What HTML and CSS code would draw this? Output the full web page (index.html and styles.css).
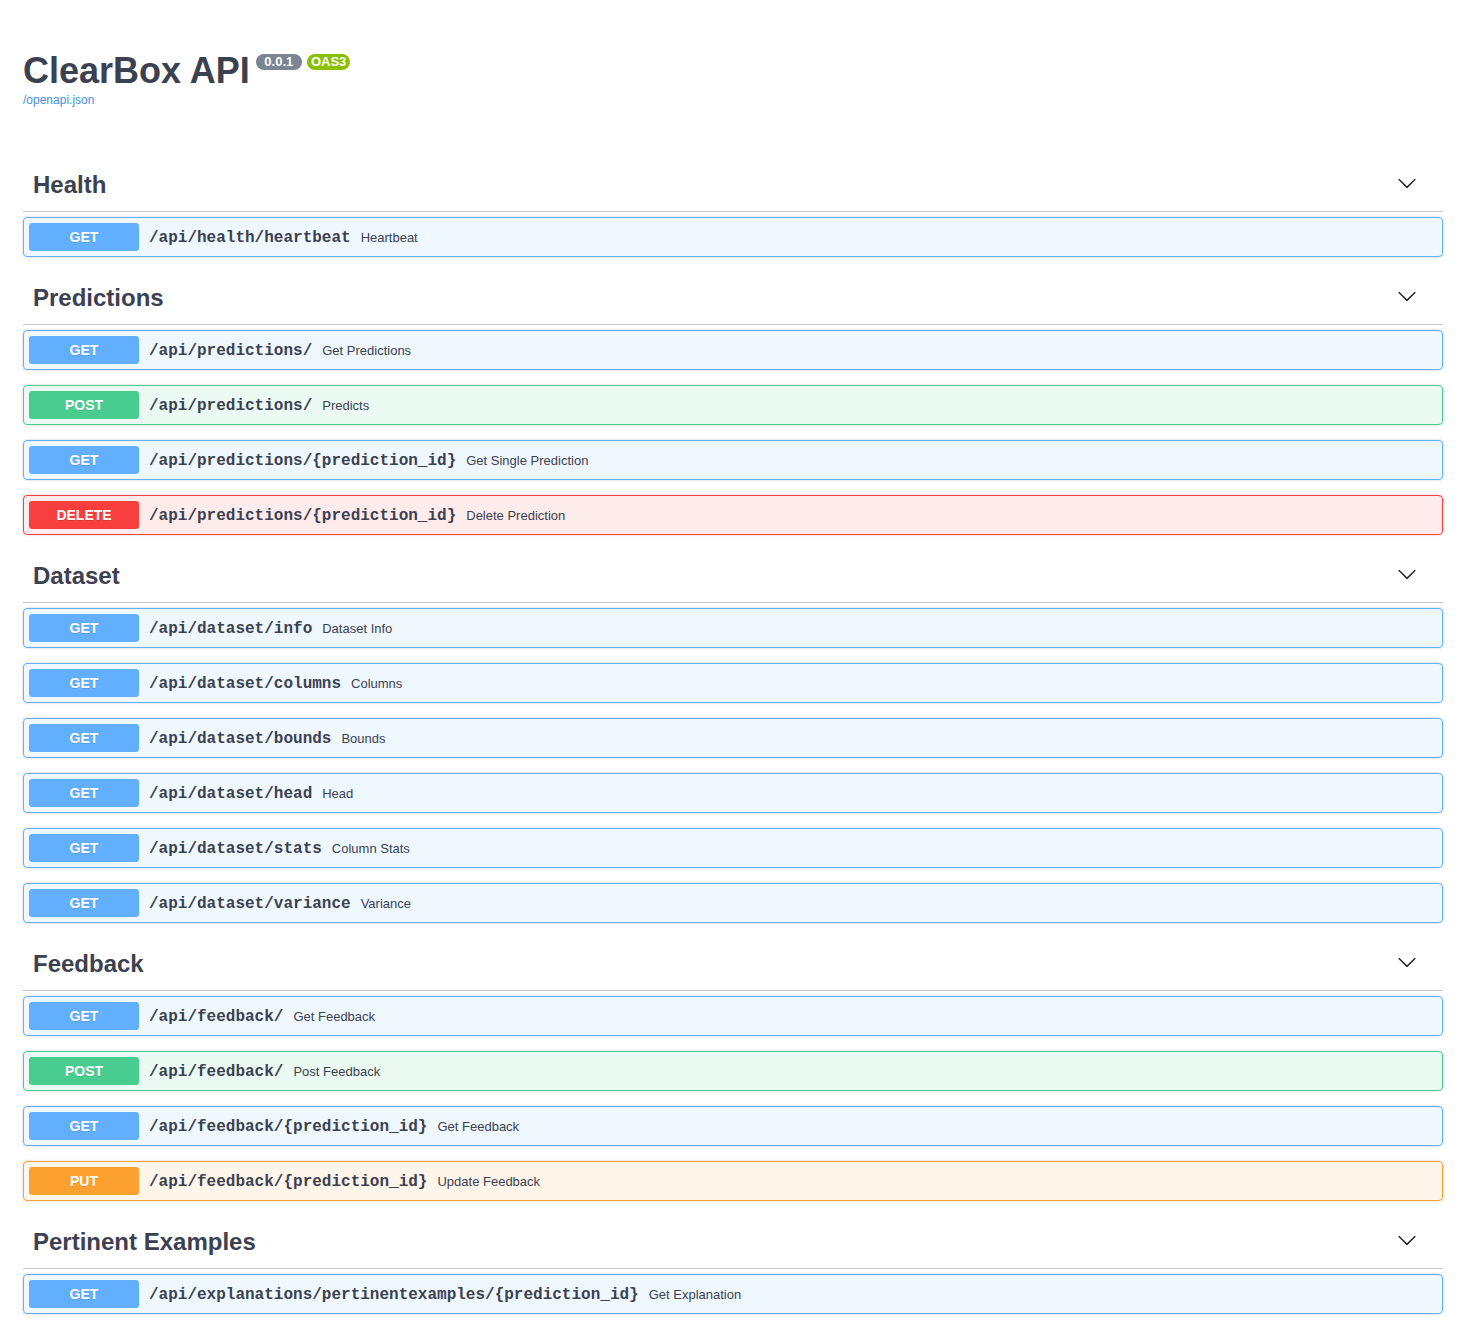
FILE: index.html
```html
<!DOCTYPE html>
<html lang="en">
<head>
<meta charset="utf-8">
<title>ClearBox API - Swagger UI</title>
<link rel="stylesheet" href="styles.css">
</head>
<body>
<div class="wrapper">
  <div class="info">
    <div class="title-row">
      <h2 class="title">ClearBox API</h2>
      <span class="pill pill-version"><pre class="version"> 0.0.1 </pre></span>
      <span class="pill pill-oas"><pre class="version">OAS3</pre></span>
    </div>
    <a class="url" href="#">/openapi.json</a>
  </div>

  <section class="tag-section">
    <h3 class="tag"><span>Health</span><svg class="arrow" width="20" height="20" viewBox="0 0 20 20"><path d="M17.418 6.109c.272-.268.709-.268.979 0s.271.701 0 .969l-7.908 7.83c-.27.268-.707.268-.979 0l-7.908-7.83c-.27-.268-.27-.701 0-.969.271-.268.709-.268.979 0L10 13.25l7.418-7.141z"/></svg></h3>
    <div class="op op-get"><span class="method">GET</span><span class="path">/api/health/heartbeat</span><span class="desc">Heartbeat</span></div>
  </section>

  <section class="tag-section">
    <h3 class="tag"><span>Predictions</span><svg class="arrow" width="20" height="20" viewBox="0 0 20 20"><path d="M17.418 6.109c.272-.268.709-.268.979 0s.271.701 0 .969l-7.908 7.83c-.27.268-.707.268-.979 0l-7.908-7.83c-.27-.268-.27-.701 0-.969.271-.268.709-.268.979 0L10 13.25l7.418-7.141z"/></svg></h3>
    <div class="op op-get"><span class="method">GET</span><span class="path">/api/predictions/</span><span class="desc">Get Predictions</span></div>
    <div class="op op-post"><span class="method">POST</span><span class="path">/api/predictions/</span><span class="desc">Predicts</span></div>
    <div class="op op-get"><span class="method">GET</span><span class="path">/api/predictions/{prediction_id}</span><span class="desc">Get Single Prediction</span></div>
    <div class="op op-delete"><span class="method">DELETE</span><span class="path">/api/predictions/{prediction_id}</span><span class="desc">Delete Prediction</span></div>
  </section>

  <section class="tag-section">
    <h3 class="tag"><span>Dataset</span><svg class="arrow" width="20" height="20" viewBox="0 0 20 20"><path d="M17.418 6.109c.272-.268.709-.268.979 0s.271.701 0 .969l-7.908 7.83c-.27.268-.707.268-.979 0l-7.908-7.83c-.27-.268-.27-.701 0-.969.271-.268.709-.268.979 0L10 13.25l7.418-7.141z"/></svg></h3>
    <div class="op op-get"><span class="method">GET</span><span class="path">/api/dataset/info</span><span class="desc">Dataset Info</span></div>
    <div class="op op-get"><span class="method">GET</span><span class="path">/api/dataset/columns</span><span class="desc">Columns</span></div>
    <div class="op op-get"><span class="method">GET</span><span class="path">/api/dataset/bounds</span><span class="desc">Bounds</span></div>
    <div class="op op-get"><span class="method">GET</span><span class="path">/api/dataset/head</span><span class="desc">Head</span></div>
    <div class="op op-get"><span class="method">GET</span><span class="path">/api/dataset/stats</span><span class="desc">Column Stats</span></div>
    <div class="op op-get"><span class="method">GET</span><span class="path">/api/dataset/variance</span><span class="desc">Variance</span></div>
  </section>

  <section class="tag-section">
    <h3 class="tag"><span>Feedback</span><svg class="arrow" width="20" height="20" viewBox="0 0 20 20"><path d="M17.418 6.109c.272-.268.709-.268.979 0s.271.701 0 .969l-7.908 7.83c-.27.268-.707.268-.979 0l-7.908-7.83c-.27-.268-.27-.701 0-.969.271-.268.709-.268.979 0L10 13.25l7.418-7.141z"/></svg></h3>
    <div class="op op-get"><span class="method">GET</span><span class="path">/api/feedback/</span><span class="desc">Get Feedback</span></div>
    <div class="op op-post"><span class="method">POST</span><span class="path">/api/feedback/</span><span class="desc">Post Feedback</span></div>
    <div class="op op-get"><span class="method">GET</span><span class="path">/api/feedback/{prediction_id}</span><span class="desc">Get Feedback</span></div>
    <div class="op op-put"><span class="method">PUT</span><span class="path">/api/feedback/{prediction_id}</span><span class="desc">Update Feedback</span></div>
  </section>

  <section class="tag-section">
    <h3 class="tag"><span>Pertinent Examples</span><svg class="arrow" width="20" height="20" viewBox="0 0 20 20"><path d="M17.418 6.109c.272-.268.709-.268.979 0s.271.701 0 .969l-7.908 7.83c-.27.268-.707.268-.979 0l-7.908-7.83c-.27-.268-.27-.701 0-.969.271-.268.709-.268.979 0L10 13.25l7.418-7.141z"/></svg></h3>
    <div class="op op-get"><span class="method">GET</span><span class="path">/api/explanations/pertinentexamples/{prediction_id}</span><span class="desc">Get Explanation</span></div>
  </section>
</div>
</body>
</html>
```

FILE: styles.css
```css
html, body {
  margin: 0;
  padding: 0;
  background: #fff;
}

body {
  font-family: "Liberation Sans", Arial, sans-serif;
  color: #3b4151;
}

.wrapper {
  width: 1420px;
  padding: 0 27px 0 23px;
}

.info {
  padding-top: 50px;
  padding-bottom: 52px;
}

.title-row {
  display: flex;
  align-items: flex-start;
}

.title {
  margin: 0;
  font-size: 36px;
  font-weight: 700;
  line-height: 41px;
  color: #3b4151;
}

.pill {
  display: inline-block;
  margin-top: 4px;
  border-radius: 57px;
  padding: 2px 4px;
  background: #7d8492;
}

.pill-version {
  margin-left: 6px;
  padding: 2px 5px;
}

.pill-oas {
  margin-left: 5px;
  background: #89bf04;
}

.version {
  margin: 0;
  font-family: "Liberation Sans", Arial, sans-serif;
  font-size: 13px;
  font-weight: 700;
  line-height: 12px;
  color: #fff;
}

.url {
  display: block;
  margin-top: 2px;
  font-size: 12px;
  line-height: 14px;
  color: #4990e2;
  text-decoration: none;
}

.tag-section {
  display: flex;
  flex-direction: column;
}

.tag {
  display: flex;
  align-items: center;
  justify-content: space-between;
  height: 52px;
  margin: 0 0 5px;
  padding: 0 26px 0 10px;
  border-bottom: 1px solid rgba(59, 65, 81, 0.3);
  font-size: 24px;
  font-weight: 700;
  color: #3b4151;
}

.arrow {
  fill: #222;
  margin-top: -5px;
}

.op {
  display: flex;
  align-items: center;
  height: 38px;
  padding: 0 5px;
  margin-bottom: 15px;
  border: 1px solid;
  border-radius: 4px;
  box-shadow: 0 0 3px rgba(0, 0, 0, 0.19);
}

.method {
  width: 110px;
  height: 28px;
  line-height: 28px;
  border-radius: 3px;
  text-align: center;
  font-size: 14px;
  font-weight: 700;
  color: #fff;
  text-shadow: 0 1px 0 rgba(0, 0, 0, 0.1);
}

.path {
  padding: 2px 10px 0;
  font-family: "Liberation Mono", "Courier New", monospace;
  font-size: 16px;
  font-weight: 700;
  color: #3b4151;
}

.desc {
  font-size: 13px;
  color: #3b4151;
}

.op-get {
  border-color: #61affe;
  background: rgba(97, 175, 254, 0.1);
}
.op-get .method { background: #61affe; }

.op-post {
  border-color: #49cc90;
  background: rgba(73, 204, 144, 0.1);
}
.op-post .method { background: #49cc90; }

.op-delete {
  border-color: #f93e3e;
  background: rgba(249, 62, 62, 0.1);
}
.op-delete .method { background: #f93e3e; }

.op-put {
  border-color: #fca130;
  background: rgba(252, 161, 48, 0.1);
}
.op-put .method { background: #fca130; }
```
